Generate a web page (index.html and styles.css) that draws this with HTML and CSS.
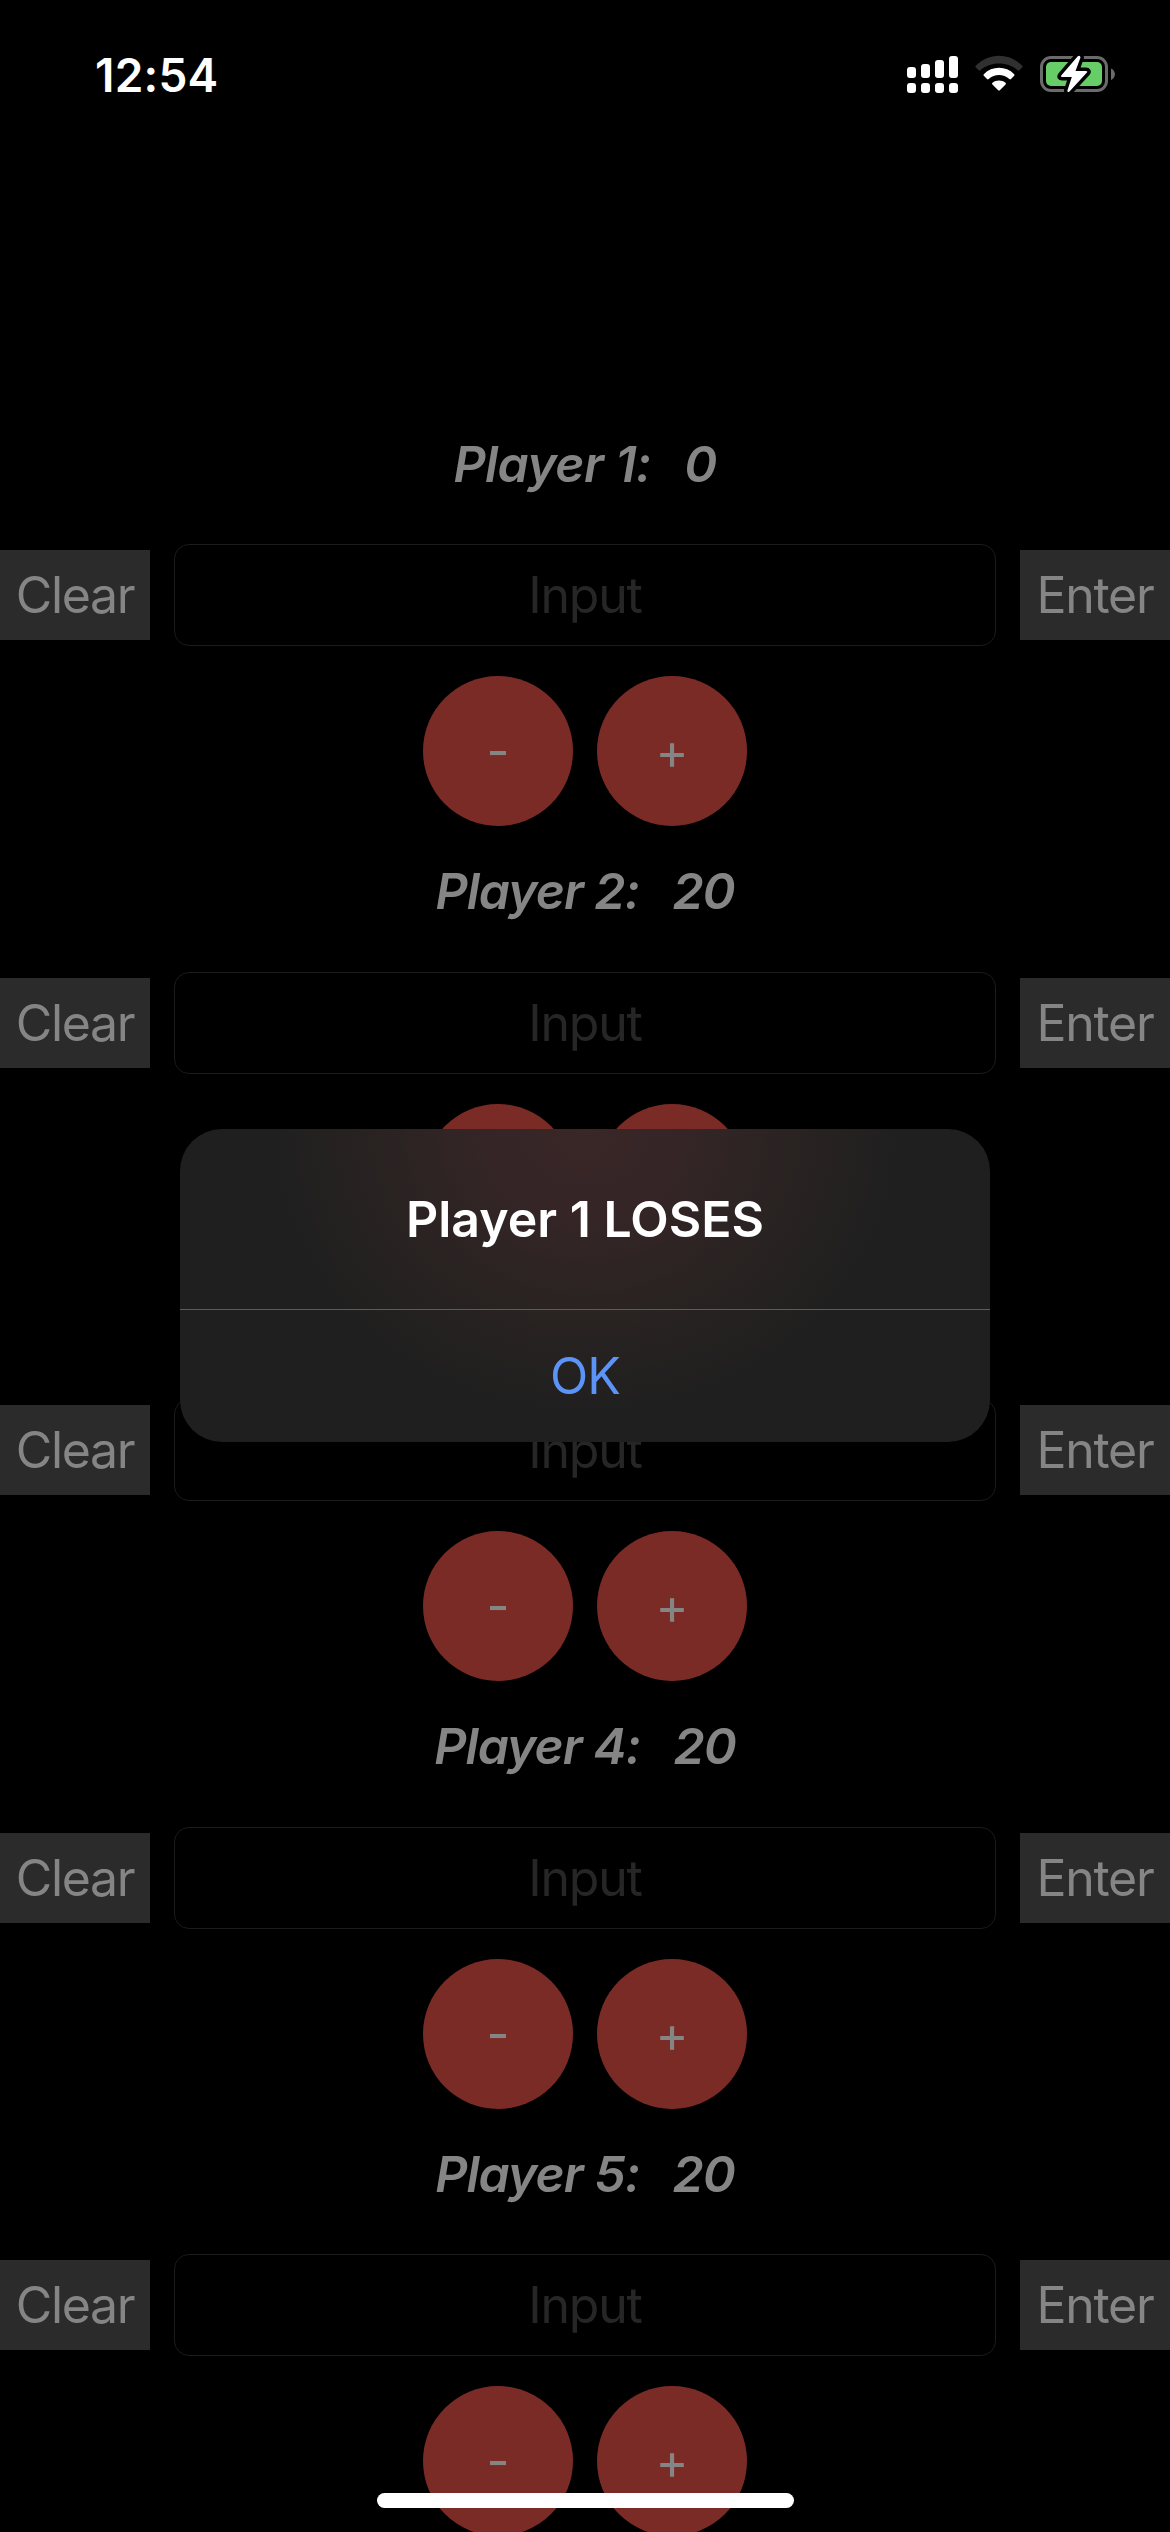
FILE: index.html
```html
<!DOCTYPE html>
<html lang="en">
<head>
<meta charset="utf-8">
<title>Life Counter</title>
<link rel="stylesheet" href="styles.css">
</head>
<body>
<div class="screen">
  <header class="status">
    <span class="time">12:54</span>
    <svg class="status-icons" width="210" height="42" viewBox="906 54 210 42">
      <g fill="#fff">
        <rect x="907" y="67" width="9" height="11" rx="3"/><rect x="921" y="64" width="9" height="14" rx="3"/><rect x="935" y="60" width="9" height="18" rx="3"/><rect x="949" y="56" width="9" height="22" rx="3"/>
        <rect x="907" y="83" width="9" height="10" rx="3"/><rect x="921" y="83" width="9" height="10" rx="3"/><rect x="935" y="83" width="9" height="10" rx="3"/><rect x="949" y="83" width="9" height="10" rx="3"/>
      </g>
      <path d="M975.8 65.800Q975 66.600 975.8 67.400L978.700 70.300Q979.500 71.100 980.400 70.300C990 61.300 1008 61.300 1017.600 70.300Q1018.500 71.100 1019.300 70.300L1022.200 67.400Q1023 66.600 1022.200 65.800C1009.500 52.300 988.500 52.300 975.800 65.800Z" fill="#303030"/>
      <path d="M983.800 74.200Q983 75 983.800 75.800L987 79Q987.800 79.800 988.700 79C994.500 73.700 1003.500 73.700 1009.300 79Q1010.200 79.800 1011 79L1014.200 75.800Q1015 75 1014.200 74.200C1006 65.700 992 65.700 983.800 74.200Z" fill="#fff"/>
      <path d="M992.500 82.700Q991.600 83.600 992.400 84.400L998.200 90.300Q999 91 999.800 90.300L1005.600 84.400Q1006.400 83.600 1005.500 82.700C1002 79.600 996 79.600 992.500 82.700Z" fill="#fff"/>
      <rect x="1041.500" y="57.500" width="65" height="33" rx="9.500" fill="none" stroke="#6b6b6b" stroke-width="3"/>
      <path d="M1111 68.500C1116.200 71 1116.200 77.500 1111 80Z" fill="#6b6b6b"/>
      <rect x="1046" y="62" width="56" height="24" rx="5" fill="#67ce67"/>
      <path d="M1077.800 56.300L1061.200 75.600Q1060.200 77 1062 77H1071.800L1067.400 90.500Q1067.400 93 1069.500 91.500L1086.900 72.600Q1088 71 1086 71H1075.500L1080.500 57.600Q1080 54.600 1077.800 56.300Z" fill="#fff" stroke="#000" stroke-width="7" stroke-linejoin="round" paint-order="stroke"/>
    </svg>
  </header>

  <main class="players">
    <section class="player">
      <h2 class="name name-out"><span class="label">Player 1:</span><span>0</span></h2>
      <div class="entry"><button class="action">Clear</button><div class="field">Input</div><button class="action">Enter</button></div>
      <div class="steps"><button class="step">-</button><button class="step">+</button></div>
    </section>
    <section class="player">
      <h2 class="name"><span class="label">Player 2:</span><span>20</span></h2>
      <div class="entry"><button class="action">Clear</button><div class="field">Input</div><button class="action">Enter</button></div>
      <div class="steps"><button class="step" aria-label="minus"></button><button class="step" aria-label="plus"></button></div>
    </section>
    <section class="player">
      <h2 class="name" aria-label="Player 3"></h2>
      <div class="entry"><button class="action">Clear</button><div class="field">Input</div><button class="action">Enter</button></div>
      <div class="steps"><button class="step">-</button><button class="step">+</button></div>
    </section>
    <section class="player">
      <h2 class="name"><span class="label">Player 4:</span><span>20</span></h2>
      <div class="entry"><button class="action">Clear</button><div class="field">Input</div><button class="action">Enter</button></div>
      <div class="steps"><button class="step">-</button><button class="step">+</button></div>
    </section>
    <section class="player">
      <h2 class="name"><span class="label">Player 5:</span><span>20</span></h2>
      <div class="entry"><button class="action">Clear</button><div class="field">Input</div><button class="action">Enter</button></div>
      <div class="steps"><button class="step">-</button><button class="step">+</button></div>
    </section>
  </main>

  <div class="alert" role="alertdialog">
    <div class="alert-title">Player 1 LOSES</div>
    <button class="alert-ok">OK</button>
  </div>
  <div class="home-bar"></div>
</div>
</body>
</html>
```

FILE: styles.css
```css
* { box-sizing: border-box; }
body { margin: 0; background: #000; font-family: Inter, "Liberation Sans", sans-serif; }
button { border: 0; padding: 0; margin: 0; font: inherit; color: inherit; letter-spacing: inherit; }

.screen {
  position: relative;
  width: 1170px;
  height: 2532px;
  overflow: hidden;
  background: #000;
  color: #858585;
}

.status {
  display: flex;
  justify-content: space-between;
  align-items: center;
  height: 150px;
  padding: 0 54px 0 95px;
}
.time { color: #fff; font-size: 46px; font-weight: 600; letter-spacing: 0.2px; }

.players { padding-top: 248.500px; }
.player { height: 427.500px; }
.name {
  display: flex;
  justify-content: center;
  align-items: center;
  gap: 33px;
  height: 130px;
  margin: 0 0 15.500px;
  font-size: 50px;
  font-weight: 600;
  font-style: italic;
  letter-spacing: -1px;
}
.name-out { letter-spacing: -0.6px; }
.entry { display: flex; align-items: center; gap: 24px; height: 102px; }
.action {
  width: 150px;
  height: 90px;
  background: #2b2b2b;
  font-size: 50px;
  letter-spacing: -1.3px;
}
.field {
  flex: 1;
  height: 102px;
  border: 1px solid #1b1b1b;
  border-radius: 15px;
  color: #262626;
  font-size: 50px;
  letter-spacing: -1.2px;
  line-height: 100px;
  text-align: center;
}
.steps { display: flex; align-items: flex-start; justify-content: center; gap: 24px; padding-top: 30px; }
.step {
  width: 150px;
  height: 150px;
  border-radius: 50%;
  background: #7b2b25;
  font-size: 50px;
}

.alert {
  position: absolute;
  left: 180px;
  top: 1129px;
  width: 810px;
  height: 313px;
  border-radius: 42px;
  overflow: hidden;
  background: radial-gradient(ellipse 320px 290px at 50% 0, #3a2728 0%, #352526 30%, #292322 65%, #1f1f1f 100%) #1f1f1f;
}
.alert-title {
  height: 181px;
  border-bottom: 1px solid #5c5d5b;
  color: #fff;
  font-size: 50px;
  font-weight: 600;
  line-height: 180px;
  text-align: center;
}
.alert-ok {
  display: block;
  width: 100%;
  height: 132px;
  background: none;
  color: #5b93f6;
  font-size: 50px;
  letter-spacing: -1px;
}
.home-bar {
  position: absolute;
  left: 377px;
  top: 2493px;
  width: 417px;
  height: 15px;
  border-radius: 8px;
  background: #fff;
}
```
